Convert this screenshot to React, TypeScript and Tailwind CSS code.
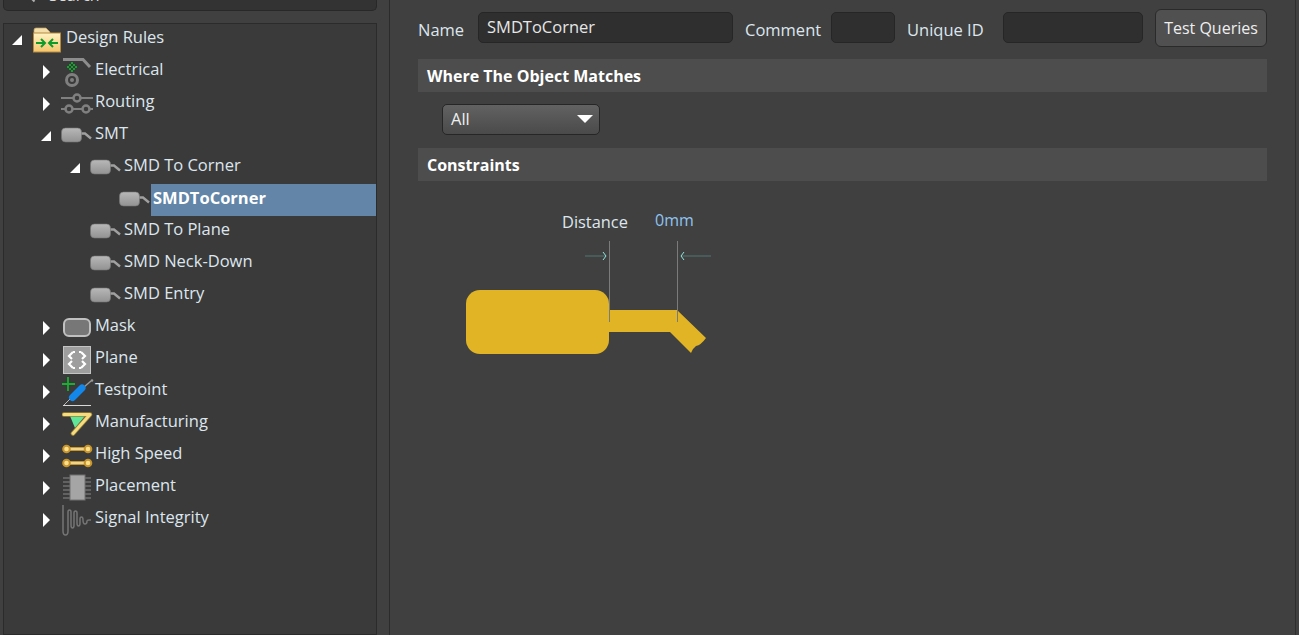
import React from "react";

const FONT = "font-['Open_Sans','Noto_Sans',sans-serif]";

function Pad() {
  return (
    <svg width="32" height="32" viewBox="0 0 32 32" className="shrink-0 -ml-[1px]">
      <defs>
        <linearGradient id="padg" x1="0" y1="0" x2="0" y2="1">
          <stop offset="0" stopColor="#b8b8b8" />
          <stop offset="1" stopColor="#929292" />
        </linearGradient>
      </defs>
      <path d="M19 13.500h5l6 5" stroke="#a0a0a0" strokeWidth="2.400" fill="none" />
      <rect x="0.500" y="8" width="20" height="14" rx="4" fill="url(#padg)" stroke="#757575" strokeWidth="0.600" />
    </svg>
  );
}

function FolderIcon() {
  return (
    <svg width="30" height="32" viewBox="0 0 30 32" className="shrink-0">
      <defs>
        <linearGradient id="fg" x1="0" y1="0" x2="0" y2="1">
          <stop offset="0" stopColor="#fff3c4" />
          <stop offset="1" stopColor="#f5c66c" />
        </linearGradient>
      </defs>
      <path d="M1 10V6q0-2 2-2h10l4 4v2z" fill="#f2dfac" stroke="#c9a25c" strokeWidth="0.700" />
      <rect x="0.500" y="9" width="27" height="19" fill="url(#fg)" stroke="#b68a3c" />
      <path d="M3 19h9M8 15l4 4-4 4M25 19h-9M20 15l-4 4 4 4" stroke="#0f9a2c" strokeWidth="2" fill="none" />
    </svg>
  );
}

function ElectricalIcon() {
  return (
    <svg width="30" height="32" viewBox="0 0 30 32" className="shrink-0">
      <path d="M1 3.500h20l7 7.500" stroke="#8d8d8d" strokeWidth="3" fill="none" />
      <g fill="#12a52c">
        <rect x="9" y="6" width="2" height="2" />
        <rect x="7" y="8" width="2" height="2" />
        <rect x="11" y="8" width="2" height="2" />
        <rect x="5" y="10" width="2" height="2" />
        <rect x="9" y="10" width="2" height="2" />
        <rect x="13" y="10" width="2" height="2" />
        <rect x="7" y="12" width="2" height="2" />
        <rect x="11" y="12" width="2" height="2" />
        <rect x="9" y="14" width="2" height="2" />
      </g>
      <circle cx="10" cy="24" r="5.500" fill="none" stroke="#7f7f7f" strokeWidth="3" />
      <circle cx="10" cy="24" r="2" fill="#7f7f7f" />
    </svg>
  );
}

function RoutingIcon() {
  return (
    <svg width="32" height="32" viewBox="0 0 32 32" className="shrink-0 -ml-[1px]">
      <g stroke="#808080" strokeWidth="2" fill="none">
        <path d="M0 10h12M19 10h13" />
        <circle cx="16" cy="10" r="3.500" strokeWidth="2.500" />
        <path d="M0 21h4M12 21h9M29 21h3" />
        <circle cx="8" cy="21" r="3.500" strokeWidth="2.500" />
        <circle cx="25" cy="21" r="3.500" strokeWidth="2.500" />
      </g>
    </svg>
  );
}

function MaskIcon() {
  return (
    <svg width="30" height="32" viewBox="0 0 30 32" className="shrink-0">
      <rect x="2" y="7" width="26" height="17" rx="5" fill="#777777" stroke="#c0c0c0" strokeWidth="2" />
    </svg>
  );
}

function PlaneIcon() {
  return (
    <svg width="30" height="32" viewBox="0 0 30 32" className="shrink-0">
      <rect x="1.500" y="2.500" width="27" height="27" fill="#9e9e9e" stroke="#c4c4c4" />
      <g stroke="#ffffff" strokeWidth="2.200" fill="none">
        <path d="M11 8l-4 4 3 3M19 8l4 4-3 3M11 24l-4-4 3-3M19 24l4-4-3-3" />
        <path d="M11 8h2M17 8h2M11 24h2M17 24h2" />
      </g>
    </svg>
  );
}

function TestpointIcon() {
  return (
    <svg width="32" height="32" viewBox="0 0 32 32" className="shrink-0">
      <path d="M6 1v14M-1 8h14" stroke="#17b12f" strokeWidth="1.800" />
      <path d="M2 29l6-6" stroke="#b8b8b8" strokeWidth="1" />
      <path d="M22 11l7-6" stroke="#9a9a9a" strokeWidth="1.400" />
      <circle cx="30" cy="4.500" r="1.300" fill="#9a9a9a" />
      <path d="M10.500 21.500L20 12" stroke="#1487ea" strokeWidth="7" strokeLinecap="round" />
      <path d="M1 29.500h28" stroke="#d8d8d8" strokeWidth="1" />
    </svg>
  );
}

function ManufacturingIcon() {
  return (
    <svg width="32" height="32" viewBox="0 0 32 32" className="shrink-0">
      <path d="M8 8h15l-10 12z" fill="#5fe698" />
      <path d="M2 6.500h26L11 25.500" fill="none" stroke="#9a8238" strokeWidth="4.600" strokeLinejoin="round" strokeLinecap="round" />
      <path d="M2 6.500h26L11 25.500" fill="none" stroke="#f5dc80" strokeWidth="3" strokeLinejoin="round" strokeLinecap="round" />
    </svg>
  );
}

function HighSpeedIcon() {
  return (
    <svg width="32" height="32" viewBox="0 0 32 32" className="shrink-0">
      <path d="M4 9h22M4 23h22" stroke="#c8962c" strokeWidth="4" fill="none" />
      <path d="M4 9h22M4 23h22" stroke="#ffe9a0" strokeWidth="1.500" fill="none" />
      <g fill="#ffe08a" stroke="#c8962c" strokeWidth="2">
        <circle cx="4.500" cy="9" r="3.300" />
        <circle cx="26" cy="9" r="3.300" />
        <circle cx="4.500" cy="23" r="3.300" />
        <circle cx="26" cy="23" r="3.300" />
      </g>
    </svg>
  );
}

function PlacementIcon() {
  return (
    <svg width="32" height="32" viewBox="0 0 32 32" className="shrink-0">
      <g stroke="#6f6f6f" strokeWidth="1.400">
        <path d="M1 6h28M1 10h28M1 14h28M1 18h28M1 22h28M1 26h28" />
      </g>
      <rect x="8" y="3" width="15" height="25" fill="#a5a5a5" stroke="#707070" />
    </svg>
  );
}

function SignalIcon() {
  return (
    <svg width="32" height="32" viewBox="0 0 32 32" className="shrink-0">
      <path
        d="M1 1v26q0 4 2.500 4t2.500-4V8q0-2 1.500-2t1.500 2v13q0 3 1.500 3t1.500-3V9q0-2 1.500-2t1.500 2v10q0 3 1.500 3t1.500-3v-4q0-2 1.500-2t1.500 3q0 4 2 4t2-3q0-1 2-1h2"
        fill="none"
        stroke="#757575"
        strokeWidth="1.500"
      />
    </svg>
  );
}

function Arrow({ open }: { open?: boolean }) {
  return open ? (
    <span className="block w-[10px] h-[10px] bg-white [clip-path:polygon(100%_0,100%_100%,0_100%)]" />
  ) : (
    <span className="block w-[7px] h-[14px] ml-[2px] bg-white [clip-path:polygon(0_0,100%_50%,0_100%)]" />
  );
}

type RowProps = {
  level: number;
  label: string;
  icon: React.ReactNode;
  arrow?: "open" | "closed";
  selected?: boolean;
};

const pads = ["pl-[8px]", "pl-[37px]", "pl-[66px]", "pl-[95px]"];

function Row({ level, label, icon, arrow, selected }: RowProps) {
  return (
    <div className={`flex items-center h-8 ${pads[level]}`}>
      <div className="w-[21px] shrink-0">
        {arrow && <Arrow open={arrow === "open"} />}
      </div>
      <div className={`${selected ? "w-[31px]" : "w-[33px]"} shrink-0 flex`}>{icon}</div>
      {selected ? (
        <div className="flex-1 h-8 bg-[#6285a8] pl-[2px] pb-[4px] flex items-center text-white font-bold text-[16.500px]">
          {label}
        </div>
      ) : (
        <div className="pb-[6px] text-[#dde6ee] text-[16.500px]">{label}</div>
      )}
    </div>
  );
}

function Field({ w, children }: { w: string; children?: React.ReactNode }) {
  return (
    <div className={`${w} h-[31px] shrink-0 rounded-[5px] bg-[#2f2f2f] border border-[#262626] px-2 pb-[1px] flex items-center text-[#e6e6e6] text-[16.500px]`}>
      {children}
    </div>
  );
}

function Section({ children }: { children: React.ReactNode }) {
  return (
    <div className="h-[33px] bg-[#4d4d4d] pl-[9px] pt-[1px] flex items-center text-white font-bold text-[16px]">
      {children}
    </div>
  );
}

export default function App() {
  return (
    <div className={`relative w-[1299px] h-[635px] overflow-hidden flex bg-[#404040] ${FONT}`}>
      {/* left panel */}
      <div className="w-[390px] shrink-0 h-full border-r border-[#2b2b2b] flex flex-col pl-[3px] pr-[12px]">
        <div className="h-[11px] shrink-0 mb-[12px] rounded-b-[5px] bg-[#333333] border-x border-b border-[#282828] overflow-hidden flex items-end">
          <div className="flex items-center gap-[13px] pl-[16px] mb-[5px] text-[#dddddd] text-[16px] leading-[20px]">
            <svg width="16" height="16" viewBox="0 0 16 16">
              <circle cx="6" cy="6" r="4.500" stroke="#b0b0b0" strokeWidth="1.500" fill="none" />
              <path d="M9.500 9.500l5 5" stroke="#b0b0b0" strokeWidth="2" />
            </svg>
            Search
          </div>
        </div>
        <div className="flex-1 bg-[#3a3a3a] border border-[#2b2b2b]">
          <Row level={0} label="Design Rules" icon={<FolderIcon />} arrow="open" />
          <Row level={1} label="Electrical" icon={<ElectricalIcon />} arrow="closed" />
          <Row level={1} label="Routing" icon={<RoutingIcon />} arrow="closed" />
          <Row level={1} label="SMT" icon={<Pad />} arrow="open" />
          <Row level={2} label="SMD To Corner" icon={<Pad />} arrow="open" />
          <Row level={3} label="SMDToCorner" icon={<Pad />} selected />
          <Row level={2} label="SMD To Plane" icon={<Pad />} />
          <Row level={2} label="SMD Neck-Down" icon={<Pad />} />
          <Row level={2} label="SMD Entry" icon={<Pad />} />
          <Row level={1} label="Mask" icon={<MaskIcon />} arrow="closed" />
          <Row level={1} label="Plane" icon={<PlaneIcon />} arrow="closed" />
          <Row level={1} label="Testpoint" icon={<TestpointIcon />} arrow="closed" />
          <Row level={1} label="Manufacturing" icon={<ManufacturingIcon />} arrow="closed" />
          <Row level={1} label="High Speed" icon={<HighSpeedIcon />} arrow="closed" />
          <Row level={1} label="Placement" icon={<PlacementIcon />} arrow="closed" />
          <Row level={1} label="Signal Integrity" icon={<SignalIcon />} arrow="closed" />
        </div>
      </div>

      {/* right panel */}
      <div className="flex-1 pl-[28px] pr-[32px] flex flex-col">
        <div className="flex items-center h-[38px] mt-[9px] mb-[12px] text-[#dde6ee] text-[16.500px]">
          <span className="w-[60px] shrink-0 pt-[4px]">Name</span>
          <div className="-mt-[1px]"><Field w="w-[255px]">SMDToCorner</Field></div>
          <span className="ml-[12px] w-[86px] shrink-0 pt-[4px]">Comment</span>
          <div className="-mt-[1px]"><Field w="w-[64px]" /></div>
          <span className="ml-[12px] w-[96px] shrink-0 pt-[4px]">Unique ID</span>
          <div className="-mt-[1px]"><Field w="w-[140px]" /></div>
          <button className="ml-[12px] w-[112px] h-[38px] shrink-0 rounded-[6px] bg-[#505050] border border-[#2a2a2a] text-[#eeeeee] text-[16px]">
            Test Queries
          </button>
        </div>
        <Section>Where The Object Matches</Section>
        <div className="h-[56px] flex items-center pl-[24px] pb-[2px]">
          <div className="w-[158px] h-[31px] rounded-[5px] border border-[#262626] bg-gradient-to-b from-[#626262] to-[#4a4a4a] pl-[8px] pr-[6px] flex items-center justify-between text-[#eeeeee] text-[16.500px]">
            <span className="pt-[1px]">All</span>
            <span className="block w-[16px] h-[8px] bg-white [clip-path:polygon(0_0,100%_0,50%_100%)]" />
          </div>
        </div>
        <Section>Constraints</Section>

        {/* rule diagram */}
        <div className="relative mt-[31px] ml-[48px] w-[246px] h-[143px]">
          <svg width="246" height="143" viewBox="466 212 246 143" className="block">
            <rect x="466" y="290" width="143" height="64" rx="14" fill="#e0b424" />
            <path d="M608 310H677L706 338Q701 345 696 346Q692 349 691 353L670 332H608Z" fill="#e0b424" />
            <path d="M609.500 241V322M677.500 241V322" stroke="#7b7b7b" strokeWidth="1" fill="none" />
            <path d="M585 256h20M681 256h30" stroke="#4c6461" strokeWidth="1.500" fill="none" />
            <path d="M603 252l3 4-3 4M684 252l-3 4 3 4" stroke="#8fe6dc" strokeWidth="1" fill="none" />
          </svg>
          <span className="absolute left-[96px] top-0 text-[#dde6ee] text-[16.400px] leading-[20px]">Distance</span>
          <span className="absolute left-[189px] -top-[2px] text-[#8fc4f2] text-[16px] leading-[20px]">0mm</span>
        </div>
      </div>
      <div className="absolute left-[1295px] top-0 w-px h-[635px] bg-[#2e2e2e]" />
    </div>
  );
}
